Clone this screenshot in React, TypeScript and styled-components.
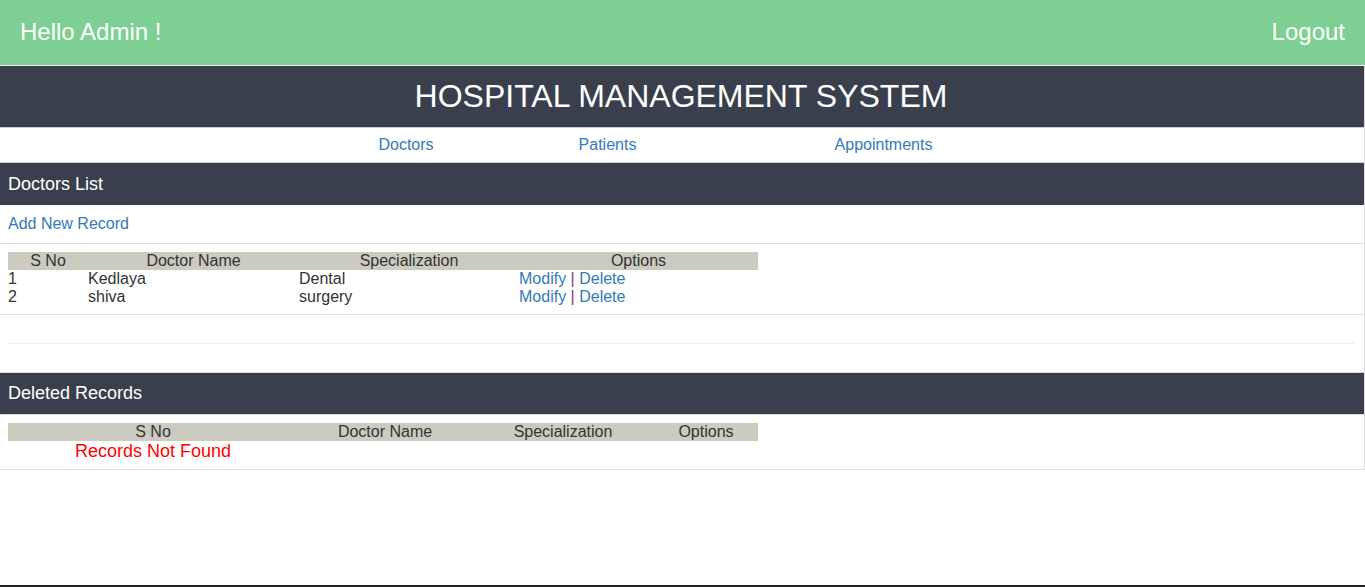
import React from "react";
import styled, { createGlobalStyle } from "styled-components";

const GlobalStyle = createGlobalStyle`
  html, body { margin: 0; padding: 0; background: #ffffff; }
  body {
    font-family: "Liberation Sans", Arial, Helvetica, sans-serif;
    font-size: 16px;
    color: #333333;
  }
  * { box-sizing: border-box; }
`;

const TopBar = styled.header`
  height: 66px;
  background: #7ecf93;
  border-bottom: 1px solid #eef4f0;
  display: flex;
  align-items: center;
  justify-content: space-between;
  padding: 0 20px 1px 20px;
  color: #ffffff;
  font-size: 24px;
`;

const TopText = styled.span`
  line-height: 1;
`;

const Panel = styled.main`
  border-right: 1px solid #dddddd;
`;

const TitleBar = styled.div`
  height: 62px;
  background: #3a3f4d;
  border-bottom: 1px solid #cfcfcf;
  color: #ffffff;
  font-size: 32px;
  display: flex;
  align-items: center;
  justify-content: center;
  padding-right: 2px;
`;

const Nav = styled.nav`
  height: 35px;
  border-bottom: 1px solid #cfcfcf;
  display: flex;
  justify-content: center;
`;

const NavGrid = styled.div`
  width: 682px;
  display: grid;
  grid-template-columns: 130px 273px 279px;
  align-items: center;
`;

const Link = styled.a`
  color: #337ab7;
  text-decoration: none;
  cursor: pointer;
`;

const NavLink = styled(Link)`
  text-align: center;
`;

const SectionHead = styled.div<{ $h: number; $border?: boolean }>`
  height: ${(p) => p.$h}px;
  background: #3a3f4d;
  color: #ffffff;
  font-size: 18px;
  display: flex;
  align-items: center;
  padding: 0 8px;
  border-bottom: ${(p) => (p.$border ? "1px solid #dddddd" : "none")};
`;

const AddRow = styled.div`
  height: 39px;
  border-bottom: 1px solid #dddddd;
  display: flex;
  align-items: center;
  padding: 0 8px;
`;

const TableBlock = styled.div`
  padding: 8px;
  border-bottom: 1px solid #dddddd;
`;

const Spacer = styled.div`
  height: 58px;
  border-bottom: 1px solid #dddddd;
  display: flex;
  align-items: center;
  padding: 0 9px 0 8px;
`;

const Rule = styled.hr`
  width: 100%;
  margin: 0;
  border: 0;
  border-top: 1px solid #eeeeee;
`;

const Table = styled.table`
  width: 750px;
  border-collapse: collapse;
  table-layout: fixed;
  line-height: 18px;
`;

const HeadCell = styled.th`
  background: #cccbbf;
  font-weight: normal;
  text-align: center;
  padding: 0;
  height: 18px;
  color: #333333;
`;

const Cell = styled.td`
  padding: 0;
  height: 18px;
  text-align: left;
  vertical-align: middle;
`;

const EmptyCell = styled.td`
  padding: 0;
  height: 20px;
  text-align: center;
  color: #ff0000;
  font-size: 18px;
  line-height: 20px;
`;

const Sep = styled.span`
  color: #8a3470;
`;

const Footer = styled.footer`
  margin-top: 115px;
  height: 40px;
  background: #222222;
`;

type Doctor = { id: number; name: string; spec: string };

const doctors: Doctor[] = [
  { id: 1, name: "Kedlaya", spec: "Dental" },
  { id: 2, name: "shiva", spec: "surgery" },
];

const listCols = [80, 211, 220, 239];
const deletedCols = [290, 174, 182, 104];

const Cols: React.FC<{ widths: number[] }> = ({ widths }) => (
  <colgroup>
    {widths.map((w, i) => (
      <col key={i} style={{ width: w }} />
    ))}
  </colgroup>
);

const HeadRow: React.FC = () => (
  <thead>
    <tr>
      <HeadCell>S No</HeadCell>
      <HeadCell>Doctor Name</HeadCell>
      <HeadCell>Specialization</HeadCell>
      <HeadCell>Options</HeadCell>
    </tr>
  </thead>
);

export default function App() {
  return (
    <>
      <GlobalStyle />
      <TopBar>
        <TopText>Hello Admin !</TopText>
        <TopText>Logout</TopText>
      </TopBar>
      <Panel>
        <TitleBar>HOSPITAL MANAGEMENT SYSTEM</TitleBar>
        <Nav>
          <NavGrid>
            <NavLink>Doctors</NavLink>
            <NavLink>Patients</NavLink>
            <NavLink>Appointments</NavLink>
          </NavGrid>
        </Nav>
        <SectionHead $h={42}>Doctors List</SectionHead>
        <AddRow>
          <Link>Add New Record</Link>
        </AddRow>
        <TableBlock>
          <Table>
            <Cols widths={listCols} />
            <HeadRow />
            <tbody>
              {doctors.map((d) => (
                <tr key={d.id}>
                  <Cell>{d.id}</Cell>
                  <Cell>{d.name}</Cell>
                  <Cell>{d.spec}</Cell>
                  <Cell>
                    <Link>Modify</Link> <Sep>|</Sep> <Link>Delete</Link>
                  </Cell>
                </tr>
              ))}
            </tbody>
          </Table>
        </TableBlock>
        <Spacer>
          <Rule />
        </Spacer>
        <SectionHead $h={42} $border>
          Deleted Records
        </SectionHead>
        <TableBlock>
          <Table>
            <Cols widths={deletedCols} />
            <HeadRow />
            <tbody>
              <tr>
                <EmptyCell>Records Not Found</EmptyCell>
                <Cell />
                <Cell />
                <Cell />
              </tr>
            </tbody>
          </Table>
        </TableBlock>
      </Panel>
      <Footer />
    </>
  );
}
